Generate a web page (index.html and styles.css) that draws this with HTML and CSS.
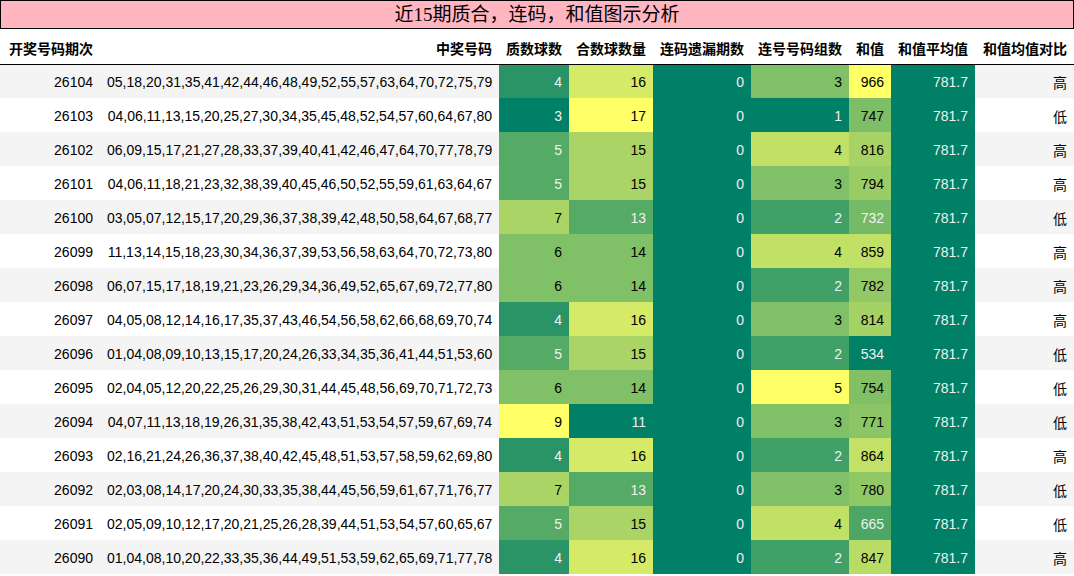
FILE: index.html
```html
<!DOCTYPE html>
<html lang="zh">
<head>
<meta charset="utf-8">
<title>近15期质合，连码，和值图示分析</title>
<link rel="stylesheet" href="styles.css">
</head>
<body>
<div class="title">近15期质合，连码，和值图示分析</div>
<table class="grid">
<colgroup>
<col class="c1"><col class="c2"><col class="c3"><col class="c4"><col class="c5"><col class="c6"><col class="c7"><col class="c8"><col class="c9">
</colgroup>
<thead>
<tr><th>开奖号码期次</th><th>中奖号码</th><th>质数球数</th><th>合数球数量</th><th>连码遗漏期数</th><th>连号号码组数</th><th>和值</th><th>和值平均值</th><th>和值均值对比</th></tr>
</thead>
<tbody>
<tr><td>26104</td><td>05,18,20,31,35,41,42,44,46,48,49,52,55,57,63,64,70,72,75,79</td><td class="lt" style="background:#2a9466">4</td><td class="dk" style="background:#d5ea66">16</td><td class="lt" style="background:#008066">0</td><td class="dk" style="background:#80c066">3</td><td class="dk" style="background:#ffff66">966</td><td class="lt" style="background:#008066">781.7</td><td>高</td></tr>
<tr><td>26103</td><td>04,06,11,13,15,20,25,27,30,34,35,45,48,52,54,57,60,64,67,80</td><td class="lt" style="background:#008066">3</td><td class="dk" style="background:#ffff66">17</td><td class="lt" style="background:#008066">0</td><td class="lt" style="background:#008066">1</td><td class="dk" style="background:#7ebe66">747</td><td class="lt" style="background:#008066">781.7</td><td>低</td></tr>
<tr><td>26102</td><td>06,09,15,17,21,27,28,33,37,39,40,41,42,46,47,64,70,77,78,79</td><td class="lt" style="background:#55aa66">5</td><td class="dk" style="background:#aad466">15</td><td class="lt" style="background:#008066">0</td><td class="dk" style="background:#c0e066">4</td><td class="dk" style="background:#a7d366">816</td><td class="lt" style="background:#008066">781.7</td><td>高</td></tr>
<tr><td>26101</td><td>04,06,11,18,21,23,32,38,39,40,45,46,50,52,55,59,61,63,64,67</td><td class="lt" style="background:#55aa66">5</td><td class="dk" style="background:#aad466">15</td><td class="lt" style="background:#008066">0</td><td class="dk" style="background:#80c066">3</td><td class="dk" style="background:#9acc66">794</td><td class="lt" style="background:#008066">781.7</td><td>高</td></tr>
<tr><td>26100</td><td>03,05,07,12,15,17,20,29,36,37,38,39,42,48,50,58,64,67,68,77</td><td class="dk" style="background:#aad466">7</td><td class="lt" style="background:#55aa66">13</td><td class="lt" style="background:#008066">0</td><td class="lt" style="background:#40a066">2</td><td class="lt" style="background:#75ba66">732</td><td class="lt" style="background:#008066">781.7</td><td>低</td></tr>
<tr><td>26099</td><td>11,13,14,15,18,23,30,34,36,37,39,53,56,58,63,64,70,72,73,80</td><td class="dk" style="background:#80c066">6</td><td class="dk" style="background:#80c066">14</td><td class="lt" style="background:#008066">0</td><td class="dk" style="background:#c0e066">4</td><td class="dk" style="background:#c0e066">859</td><td class="lt" style="background:#008066">781.7</td><td>高</td></tr>
<tr><td>26098</td><td>06,07,15,17,18,19,21,23,26,29,34,36,49,52,65,67,69,72,77,80</td><td class="dk" style="background:#80c066">6</td><td class="dk" style="background:#80c066">14</td><td class="lt" style="background:#008066">0</td><td class="lt" style="background:#40a066">2</td><td class="dk" style="background:#92c866">782</td><td class="lt" style="background:#008066">781.7</td><td>高</td></tr>
<tr><td>26097</td><td>04,05,08,12,14,16,17,35,37,43,46,54,56,58,62,66,68,69,70,74</td><td class="lt" style="background:#2a9466">4</td><td class="dk" style="background:#d5ea66">16</td><td class="lt" style="background:#008066">0</td><td class="dk" style="background:#80c066">3</td><td class="dk" style="background:#a5d266">814</td><td class="lt" style="background:#008066">781.7</td><td>高</td></tr>
<tr><td>26096</td><td>01,04,08,09,10,13,15,17,20,24,26,33,34,35,36,41,44,51,53,60</td><td class="lt" style="background:#55aa66">5</td><td class="dk" style="background:#aad466">15</td><td class="lt" style="background:#008066">0</td><td class="lt" style="background:#40a066">2</td><td class="lt" style="background:#008066">534</td><td class="lt" style="background:#008066">781.7</td><td>低</td></tr>
<tr><td>26095</td><td>02,04,05,12,20,22,25,26,29,30,31,44,45,48,56,69,70,71,72,73</td><td class="dk" style="background:#80c066">6</td><td class="dk" style="background:#80c066">14</td><td class="lt" style="background:#008066">0</td><td class="dk" style="background:#ffff66">5</td><td class="dk" style="background:#82c066">754</td><td class="lt" style="background:#008066">781.7</td><td>低</td></tr>
<tr><td>26094</td><td>04,07,11,13,18,19,26,31,35,38,42,43,51,53,54,57,59,67,69,74</td><td class="dk" style="background:#ffff66">9</td><td class="lt" style="background:#008066">11</td><td class="lt" style="background:#008066">0</td><td class="dk" style="background:#80c066">3</td><td class="dk" style="background:#8cc566">771</td><td class="lt" style="background:#008066">781.7</td><td>低</td></tr>
<tr><td>26093</td><td>02,16,21,24,26,36,37,38,40,42,45,48,51,53,57,58,59,62,69,80</td><td class="lt" style="background:#2a9466">4</td><td class="dk" style="background:#d5ea66">16</td><td class="lt" style="background:#008066">0</td><td class="lt" style="background:#40a066">2</td><td class="dk" style="background:#c3e166">864</td><td class="lt" style="background:#008066">781.7</td><td>高</td></tr>
<tr><td>26092</td><td>02,03,08,14,17,20,24,30,33,35,38,44,45,56,59,61,67,71,76,77</td><td class="dk" style="background:#aad466">7</td><td class="lt" style="background:#55aa66">13</td><td class="lt" style="background:#008066">0</td><td class="dk" style="background:#80c066">3</td><td class="dk" style="background:#91c866">780</td><td class="lt" style="background:#008066">781.7</td><td>低</td></tr>
<tr><td>26091</td><td>02,05,09,10,12,17,20,21,25,26,28,39,44,51,53,54,57,60,65,67</td><td class="lt" style="background:#55aa66">5</td><td class="dk" style="background:#aad466">15</td><td class="lt" style="background:#008066">0</td><td class="dk" style="background:#c0e066">4</td><td class="lt" style="background:#4da666">665</td><td class="lt" style="background:#008066">781.7</td><td>低</td></tr>
<tr><td>26090</td><td>01,04,08,10,20,22,33,35,36,44,49,51,53,59,62,65,69,71,77,78</td><td class="lt" style="background:#2a9466">4</td><td class="dk" style="background:#d5ea66">16</td><td class="lt" style="background:#008066">0</td><td class="lt" style="background:#40a066">2</td><td class="dk" style="background:#b9dc66">847</td><td class="lt" style="background:#008066">781.7</td><td>高</td></tr>
</tbody>
</table>
</body>
</html>
```
FILE: styles.css
```css
html, body {
  margin: 0;
  padding: 0;
  background: #ffffff;
}
body {
  width: 1074px;
  font-family: "Liberation Sans", "Noto Sans CJK SC", sans-serif;
  color: #000000;
}
.title {
  box-sizing: border-box;
  height: 29px;
  border: 1px solid #000000;
  background: #ffb6c1;
  text-align: center;
  font-family: "Liberation Serif", "Noto Sans CJK SC", serif;
  font-size: 19px;
  line-height: 27px;
}
.grid {
  width: 1074px;
  border-collapse: collapse;
  table-layout: fixed;
  font-size: 14px;
}
.c1 { width: 100px; }
.c2 { width: 399px; }
.c3 { width: 70px; }
.c4 { width: 84px; }
.c5 { width: 98px; }
.c6 { width: 98px; }
.c7 { width: 42px; }
.c8 { width: 84px; }
.c9 { width: 99px; }
.grid th {
  height: 35px;
  padding: 3px 7px 0;
  text-align: right;
  font-weight: bold;
  white-space: nowrap;
  border-bottom: 1px solid #000000;
  box-sizing: border-box;
}
.grid td {
  height: 34px;
  padding: 2px 7px 0;
  text-align: right;
  white-space: nowrap;
  box-sizing: border-box;
}
.grid tbody tr:nth-child(odd) {
  background: #f4f4f4;
}
.grid td.lt { color: #f1f1f1; }
.grid td.dk { color: #000000; }
```
